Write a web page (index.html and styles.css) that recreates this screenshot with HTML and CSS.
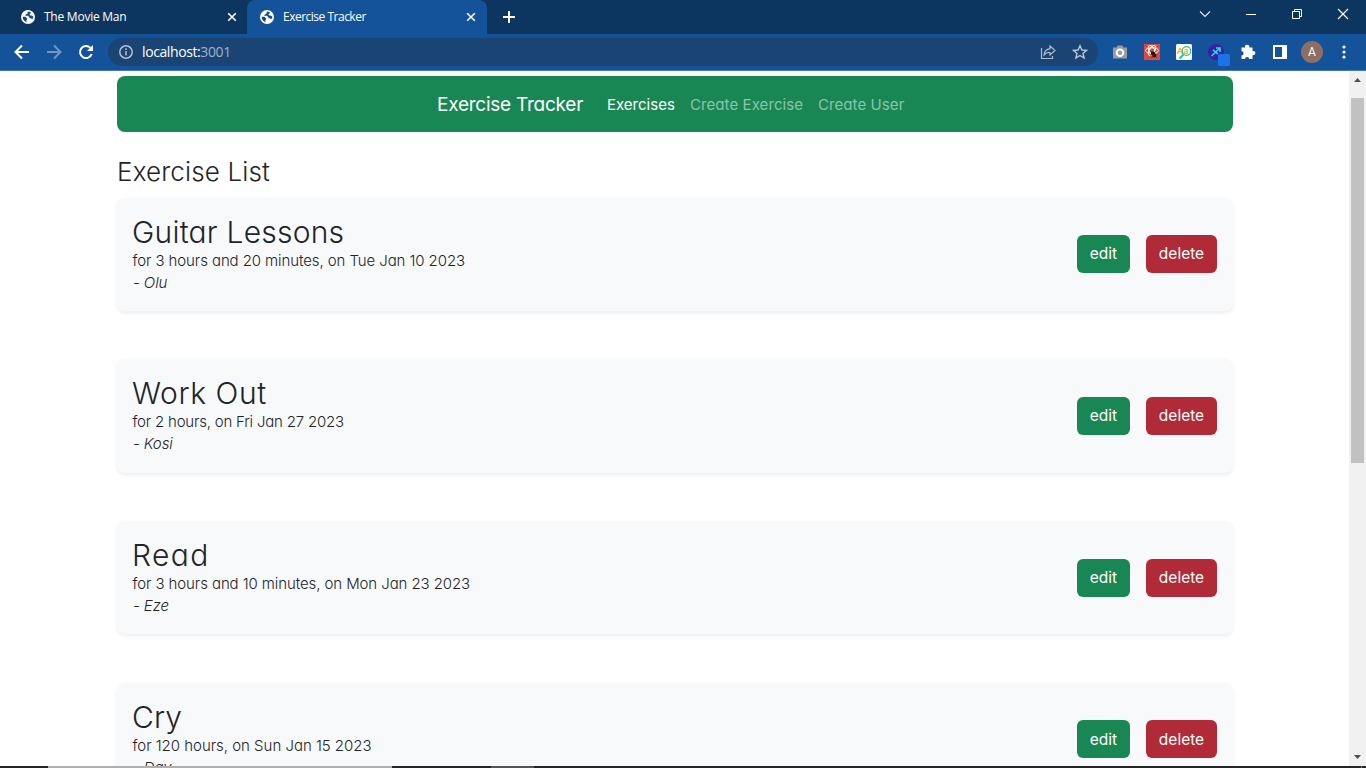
FILE: index.html
```html
<!DOCTYPE html>
<html lang="en">
<head>
<meta charset="utf-8">
<title>Exercise Tracker</title>
<link rel="stylesheet" href="styles.css">
</head>
<body>
<svg class="defs" aria-hidden="true">
  <symbol id="globe" viewBox="0 0 14 14"><circle cx="7" cy="7" r="7" fill="#fff"/><path d="M7.800 1.600L6.600 2.200V3.400L4.800 4.400L4.200 5.800H7L8.400 7.200V8.200H10L11 9.200L11.800 8.600L12.500 6.800L10.800 5.500H9.200L8.400 4.500L10.200 2.800ZM1.700 6.800H4.500L6.300 8.800L5.400 10.500V12.200L3.200 10.800Q1.600 9 1.700 6.800Z" fill="#124a87"/></symbol>
  <symbol id="cross" viewBox="0 0 10 10"><path d="M1.200 1.200L8.800 8.800M8.800 1.200L1.200 8.800" stroke="#fff" stroke-width="1.600"/></symbol>
</svg>
<header class="tabs">
  <div class="tab"><svg class="globe"><use href="#globe"/></svg><span class="tab-title">The Movie Man</span><svg class="cross"><use href="#cross"/></svg></div>
  <div class="tab active"><svg class="globe"><use href="#globe"/></svg><span class="tab-title tracker">Exercise Tracker</span><svg class="cross"><use href="#cross"/></svg></div>
  <svg class="plus" viewBox="0 0 12 12"><path d="M6 0V12M0 6H12" stroke="#fff" stroke-width="2"/></svg>
  <div class="window-controls">
    <svg width="12" height="12" viewBox="0 0 12 12"><path d="M1 3.500L6 8.500L11 3.500" fill="none" stroke="#e4ebf3" stroke-width="1.100"/></svg>
    <svg width="12" height="12" viewBox="0 0 12 12"><path d="M1 6.500H11" stroke="#fff"/></svg>
    <svg width="12" height="12" viewBox="0 0 12 12"><path d="M1.500 3.500H8.500V10.500H1.500ZM3.500 3V1.500H10.500V8.500H9" fill="none" stroke="#fff"/></svg>
    <svg width="12" height="12" viewBox="0 0 12 12"><path d="M1 1L11 11M11 1L1 11" stroke="#fff" stroke-width="1.200"/></svg>
  </div>
</header>
<div class="toolbar">
  <svg class="nav-icon" viewBox="0 0 16 16"><path d="M15 8H2M8 1.500L1.500 8L8 14.500" fill="none" stroke="#fff" stroke-width="2"/></svg>
  <svg class="nav-icon" viewBox="0 0 16 16"><path d="M1 8H14M8 1.500L14.500 8L8 14.500" fill="none" stroke="#7396c1" stroke-width="2"/></svg>
  <svg class="nav-icon" viewBox="0 0 16 16"><path d="M13.700 10A6 6 0 1 1 12.400 3.900" fill="none" stroke="#fff" stroke-width="2"/><path d="M15 1V7H9Z" fill="#fff"/></svg>
  <div class="address">
    <svg width="14" height="14" viewBox="0 0 14 14"><circle cx="7" cy="7" r="6.200" fill="none" stroke="#b5c1ce" stroke-width="1.500"/><path d="M7 6V10.500M7 3.300V4.900" stroke="#b5c1ce" stroke-width="1.500"/></svg>
    <span class="url">localhost:<span class="port">3001</span></span>
    <svg class="share" width="16" height="16" viewBox="0 0 16 16"><path d="M1.500 4V14.500H12.500V12M10 2L15 6.500L10 11V8.500Q6.500 8 4 11Q4.500 5.500 10 4.700Z" fill="none" stroke="#aebccc" stroke-width="1.200"/></svg>
    <svg class="star" width="16" height="16" viewBox="0 0 16 16"><path d="M8 1.700L9.900 6L14.500 6.400L11 9.400L12.100 14L8 11.500L3.900 14L5 9.400L1.500 6.400L6.100 6Z" fill="none" stroke="#bcc8d5" stroke-width="1.400"/></svg>
  </div>
  <div class="extensions">
    <svg viewBox="0 0 16 16"><path d="M1 3.500H4.500L5.500 1.500H10.500L11.500 3.500H15V14.500H1Z" fill="#999b9e"/><circle cx="8" cy="8.700" r="3.300" fill="#999" stroke="#fff" stroke-width="2"/></svg>
    <svg viewBox="0 0 16 16"><path d="M0 0H16V16H0Z" fill="#dd4a3d"/><g fill="none" stroke="#fff"><ellipse cx="8" cy="6.500" rx="6.500" ry="2.700"/><ellipse cx="8" cy="6.500" rx="2.700" ry="5.500" transform="rotate(30 8 6.500)"/><ellipse cx="8" cy="6.500" rx="2.700" ry="5.500" transform="rotate(-30 8 6.500)"/></g><ellipse cx="9.500" cy="10.200" rx="2" ry="3.300" transform="rotate(-35 9.500 10.200)" fill="#241919"/><path d="M6.500 7L12.500 13.500M6.500 11.500L12 7.500M7.500 13.500L12.500 11" stroke="#241919"/></svg>
    <svg viewBox="0 0 16 16"><rect width="16" height="16" rx="1.500" fill="#fff"/><text class="aa-letters" x="1" y="10">Aa</text><circle cx="10.500" cy="7" r="4.300" fill="none" stroke="#39b99c" stroke-width="1.200"/><path d="M7.500 10.500L3.500 14.500" stroke="#39b99c" stroke-width="2"/></svg>
    <svg viewBox="0 0 16 16" overflow="visible"><circle cx="8" cy="8" r="8" fill="#3b20a1"/><path d="M3.500 12L12 4M8 4H12V8M5 6L10 10" fill="none" stroke="#24d8df" stroke-width="1.700"/><rect x="10" y="10" width="12" height="12" rx="2" fill="#1a73e8"/></svg>
    <svg viewBox="0 0 16 16"><path d="M1.500 3.500H5A2.200 2.200 0 1 1 9.300 3.500H12.500V7A2.200 2.200 0 1 1 12.500 11.200V15H9.200A2.100 2.100 0 0 0 5 15H1.500V11.500A2.100 2.100 0 0 0 1.500 7.300Z" fill="#fff"/></svg>
    <svg viewBox="0 0 16 16"><path d="M1 1H15V15H1ZM3 3V13H10V3Z" fill="#fff" fill-rule="evenodd"/></svg>
    <span class="avatar">A</span>
    <svg class="dots" viewBox="0 0 4 16"><circle cx="2" cy="3" r="1.600" fill="#fff"/><circle cx="2" cy="8" r="1.600" fill="#fff"/><circle cx="2" cy="13" r="1.600" fill="#fff"/></svg>
  </div>
</div>
<div class="viewport">
  <main class="page">
    <nav class="navbar"><a class="brand">Exercise Tracker</a><a class="link current">Exercises</a><a class="link create-exercise">Create Exercise</a><a class="link create-user">Create User</a></nav>
    <h3 class="list-title">Exercise List</h3>
    <section class="card guitar"><div><h2 class="name">Guitar Lessons</h2><p class="detail">for 3 hours and 20 minutes, on Tue Jan 10 2023</p><p class="user">- Olu</p></div><div class="actions"><button class="edit">edit</button><button class="delete">delete</button></div></section>
    <section class="card workout"><div><h2 class="name">Work Out</h2><p class="detail">for 2 hours, on Fri Jan 27 2023</p><p class="user">- Kosi</p></div><div class="actions"><button class="edit">edit</button><button class="delete">delete</button></div></section>
    <section class="card read"><div><h2 class="name">Read</h2><p class="detail">for 3 hours and 10 minutes, on Mon Jan 23 2023</p><p class="user">- Eze</p></div><div class="actions"><button class="edit">edit</button><button class="delete">delete</button></div></section>
    <section class="card cry"><div><h2 class="name">Cry</h2><p class="detail">for 120 hours, on Sun Jan 15 2023</p><p class="user">- Dav</p></div><div class="actions"><button class="edit">edit</button><button class="delete">delete</button></div></section>
  </main>
  <aside class="scrollbar"><svg width="17" height="17" viewBox="0 0 17 17"><path d="M5 11L8.500 7L12 11Z" fill="#505050"/></svg><div class="thumb"></div><svg class="down" width="17" height="17" viewBox="0 0 17 17"><path d="M5 6L8.500 10L12 6Z" fill="#505050"/></svg></aside>
</div>
<footer class="taskbar"><span class="running"></span><span class="pinned"></span><span class="edge"></span></footer>
</body>
</html>
```
FILE: styles.css
```css
* { box-sizing: border-box; }
body { margin: 0; height: 768px; overflow: hidden; display: flex; flex-direction: column; background: #fff; color: #212529; font-family: Inter, "Open Sans", sans-serif; font-feature-settings: "cv11"; }
.defs { display: none; }
svg { display: block; flex: none; }
h2, h3, p { margin: 0; font-weight: 400; }

.tabs { height: 34px; flex: none; display: flex; align-items: center; background: #0c355f; font: 12px "Open Sans", sans-serif; color: #fff; }
.tab { width: 247px; height: 34px; display: flex; align-items: center; padding: 0 10px 0 21px; }
.tab.active { width: 240px; padding: 0 11px 0 13px; background: #14529a; border-radius: 8px 8px 0 0; }
.globe { width: 14px; height: 14px; }
.tab-title { margin-left: 9px; padding-bottom: 1px; letter-spacing: -0.24px; }
.tracker { letter-spacing: -0.5px; }
.cross { width: 10px; height: 10px; margin-left: auto; }
.plus { width: 12px; height: 12px; margin-left: 16px; }
.window-controls { display: flex; gap: 34px; margin-left: auto; margin-right: 17px; padding-bottom: 6px; }

.toolbar { height: 37px; flex: none; display: flex; align-items: center; padding-left: 14px; background: #14529a; border-bottom: 1px solid #4479b5; }
.nav-icon { width: 16px; height: 16px; margin-right: 16px; }
.address { width: 990px; height: 28px; margin-left: -2px; padding: 0 10px 0 11px; display: flex; align-items: center; border-radius: 14px; background: #194473; font: 14px "Open Sans", sans-serif; color: #fff; }
.url { margin-left: 9px; padding-bottom: 1px; letter-spacing: -0.4px; }
.port { color: #9fb3ca; }
.share { margin-left: auto; }
.star { margin-left: 16px; }
.extensions { display: flex; align-items: center; margin-left: 14px; gap: 16px; }
.extensions svg { width: 16px; height: 16px; }
.aa-letters { font: bold 9px "Open Sans", sans-serif; fill: #f3b631; }
.avatar { width: 22px; height: 22px; margin: 0 -3px; border-radius: 50%; background: #8d6e63; color: #fff; font: 12px/22px Roboto, sans-serif; text-align: center; }
.extensions .dots { width: 4px; margin-left: 6px; }

.viewport { flex: 1; min-height: 0; display: flex; overflow: hidden; }
.page { width: 1349px; padding: 5px 116px 0 117px; overflow: hidden; }
.navbar { height: 56px; padding-left: 320px; display: flex; align-items: center; border-radius: 8px; background: #198754; color: #fff; white-space: nowrap; }
.brand { width: 170px; font-size: 19px; letter-spacing: -0.24px; }
.link { width: 83px; font-size: 15px; color: #8cc3a9; }
.link.current { color: #fff; }
.link.create-exercise { width: 128px; letter-spacing: 0.08px; }
.link.create-user { letter-spacing: 0.08px; }
.list-title { height: 65.8px; padding-top: 24px; font-size: 26px; line-height: 32px; font-weight: 350; letter-spacing: 0.15px; }
.card { height: 113.3px; margin-bottom: 48.3px; padding: 16px; display: flex; justify-content: space-between; border-radius: 8px; background: #f8f9fa; box-shadow: 0 2px 4px rgba(0, 0, 0, .075); }
.name { height: 36px; margin-left: -1px; font-size: 30px; line-height: 36px; font-weight: 350; white-space: nowrap; }
.guitar .name { letter-spacing: 0.22px; }
.workout .name { letter-spacing: 0.6px; }
.read .name { letter-spacing: 1.4px; }
.cry .name { letter-spacing: 0.1px; }
.detail, .user { font-size: 15px; line-height: 22px; font-weight: 350; letter-spacing: -0.09px; }
.detail { margin-left: -0.5px; }
.workout .detail { letter-spacing: -0.2px; }
.cry .detail { letter-spacing: -0.02px; }
.user { font-style: italic; }
.actions { display: flex; gap: 16px; align-items: center; padding-bottom: 0.2px; }
button { height: 38px; padding: 0; border: 0; border-radius: 6px; color: #fff; font: 15.5px Inter, sans-serif; }
.guitar button { padding-bottom: 1px; }
.edit { width: 53px; background: #198754; }
.delete { width: 71px; background: #b02a37; }
.scrollbar { width: 17px; background: #f1f1f1; display: flex; flex-direction: column; }
.thumb { width: 13px; height: 365px; margin: 10px 2px 0; background: #c1c1c1; }
.down { margin-top: auto; }
.taskbar { height: 2px; flex: none; display: flex; padding-left: 48px; background: #242528; }
.running { width: 344px; background: #b0b0b0; }
.pinned { width: 43px; margin-left: 99px; background: #555; }
.edge { width: 1px; margin-left: auto; margin-right: 4px; background: #777; }
```
